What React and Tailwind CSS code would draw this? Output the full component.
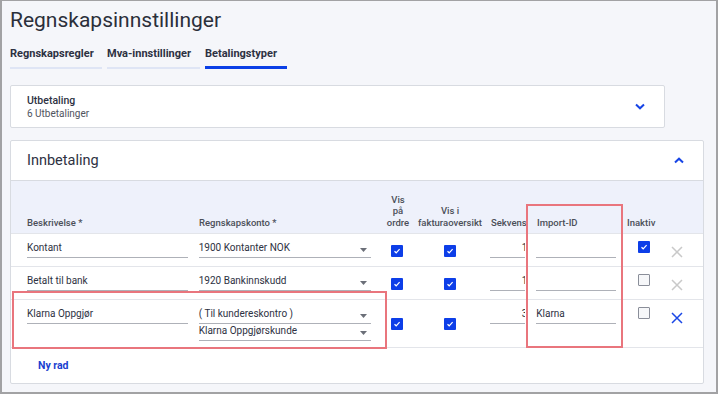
import React from "react";

const F = "font-['Roboto','Liberation_Sans',sans-serif]";

function Check({ checked }) {
  if (checked) {
    return (
      <div className="w-[12px] h-[12px] rounded-[1px] bg-[#0d3ee8] flex items-center justify-center">
        <svg width="8" height="8" viewBox="0 0 8 8">
          <path d="M1.5 4.2 L3.2 5.8 L6.6 2.2" stroke="white" strokeWidth="1.2" fill="none" />
        </svg>
      </div>
    );
  }
  return <div className="w-[12px] h-[12px] rounded-[1px] border-[1.5px] border-[#8a8e99] bg-[#f6f7f9]" />;
}

function XIcon({ active }) {
  return (
    <svg width="12" height="12" viewBox="0 0 12 12">
      <path d="M1 1 L11 11 M11 1 L1 11" stroke={active ? "#1a47e6" : "#c9c9c9"} strokeWidth="1.5" fill="none" />
    </svg>
  );
}

function Input({ value, w, right }) {
  return (
    <div className={`${w} h-[17px] border-b border-[#aeb1b8] text-[10px] leading-[14px] text-[#2d3142] ${right ? "text-right" : ""} whitespace-nowrap`}>
      {value}
    </div>
  );
}

function Select({ value }) {
  return (
    <div className="w-[172px] h-[17px] border-b border-[#aeb1b8] flex items-start justify-between text-[10px] leading-[14px] text-[#2d3142]">
      <span>{value}</span>
      <svg width="7" height="4" viewBox="0 0 7 4" className="mt-[7px] mr-[4px]">
        <path d="M0 0 L7 0 L3.5 4 Z" fill="#6b6f78" />
      </svg>
    </div>
  );
}

function Row({ h, desc, selects, sek, imp, inaktiv, xActive }) {
  return (
    <div className={`flex ${h} border-t border-[#e3e5ea] pl-[16px] pt-[7px]`}>
      <div className="w-[172px]">
        <Input value={desc} w="w-[161px]" />
      </div>
      <div className="w-[181px] flex flex-col">
        {selects.map((s, i) => (
          <Select key={i} value={s} />
        ))}
      </div>
      <div className="w-[36px] flex justify-center self-center -mt-[6px] pr-[1px]">
        <Check checked />
      </div>
      <div className="w-[68px] flex justify-center self-center -mt-[6px] pl-[1px]">
        <Check checked />
      </div>
      <div className="w-[42px] pl-[7px]">
        <div className="w-[35px] overflow-hidden">
          <Input value={sek} w="w-[37px]" right />
        </div>
      </div>
      <div className="w-[101px] pl-[11px]">
        <Input value={imp} w="w-[80px]" />
      </div>
      <div className="w-[36px] pl-[12px]">
        <Check checked={inaktiv} />
      </div>
      <div className="w-[41px] pl-[9px] pt-[5px]">
        <XIcon active={xActive} />
      </div>
    </div>
  );
}

export default function App() {
  return (
    <div className={`${F} relative w-[718px] h-[394px] overflow-hidden bg-[#f5f6fa] border-t border-l-2 border-r-2 border-b-2 border-[#a2a2a4] pl-[8px]`}>
      <div className="pt-[5px] text-[21px] leading-[28px] text-[#2b2f3a]">Regnskapsinnstillinger</div>

      <div className="flex items-end gap-[5px] mt-[13px] text-[11px] font-bold leading-[14px] text-[#2d3142]">
        <div className="w-[92px] pb-[6px] border-b-2 border-[#dfe5f5]">Regnskapsregler</div>
        <div className="w-[93px] pb-[6px] border-b-2 border-[#dfe5f5]">Mva-innstillinger</div>
        <div className="w-[82px] pb-[5px] border-b-[3px] border-[#0b3fe6]">Betalingstyper</div>
      </div>

      <div className="mt-[16px] w-[655px] h-[43px] bg-white border border-[#d8dbe1] rounded-[2px] flex items-center justify-between pl-[16px] pr-[19px]">
        <div className="flex flex-col">
          <span className="text-[10.5px] leading-[13px] font-medium text-[#2d3142]">Utbetaling</span>
          <span className="text-[10px] leading-[13px] text-[#50545e]">6 Utbetalinger</span>
        </div>
        <svg width="10" height="7" viewBox="0 0 10 7">
          <path d="M1 1.5 L5 5.3 L9 1.5" stroke="#1745e6" strokeWidth="2" fill="none" />
        </svg>
      </div>

      <div className="mt-[12px] w-[694px] h-[244px] bg-white border border-[#d8dbe1] rounded-[2px] flex flex-col">
        <div className="h-[40px] flex items-center justify-between pl-[16px] pr-[19px] border-b border-[#d8dbe1]">
          <span className="text-[14.5px] text-[#2d3142]">Innbetaling</span>
          <svg width="10" height="7" viewBox="0 0 10 7">
            <path d="M1 5.5 L5 1.7 L9 5.5" stroke="#1745e6" strokeWidth="2" fill="none" />
          </svg>
        </div>

        <div className="h-[52px] bg-[#eef1fb] flex items-end pl-[16px] pb-[5px] text-[9.5px] leading-[11.5px] font-medium text-[#4b4f58]">
          <div className="w-[172px]">Beskrivelse *</div>
          <div className="w-[181px]">Regnskapskonto *</div>
          <div className="w-[36px] text-center">Vis<br />på<br />ordre</div>
          <div className="w-[68px] text-center">Vis i<br />fakturaoversikt</div>
          <div className="w-[42px] pl-[7px]">
            <div className="w-[35px] overflow-hidden whitespace-nowrap">Sekvens</div>
          </div>
          <div className="w-[101px] pl-[11px]">Import-ID</div>
          <div className="w-[36px]">Inaktiv</div>
        </div>

        <Row h="h-[33px]" desc="Kontant" selects={["1900 Kontanter NOK"]} sek="1" imp="" inaktiv />
        <Row h="h-[33px]" desc="Betalt til bank" selects={["1920 Bankinnskudd"]} sek="1" imp="" />
        <Row h="h-[48px]" desc="Klarna Oppgjør" selects={["( Til kundereskontro )", "Klarna Oppgjørskunde"]} sek="3" imp="Klarna" xActive />

        <div className="flex-1 border-t border-[#e3e5ea] flex items-center pl-[27px]">
          <span className="text-[10.5px] font-bold text-[#1a3fd0]">Ny rad</span>
        </div>
      </div>

      <div className="absolute left-[10px] top-[290px] w-[375px] h-[58px] border-2 border-[#e9757d]" />
      <div className="absolute left-[524px] top-[203px] w-[97px] h-[144px] border-2 border-[#e9757d]" />
    </div>
  );
}
